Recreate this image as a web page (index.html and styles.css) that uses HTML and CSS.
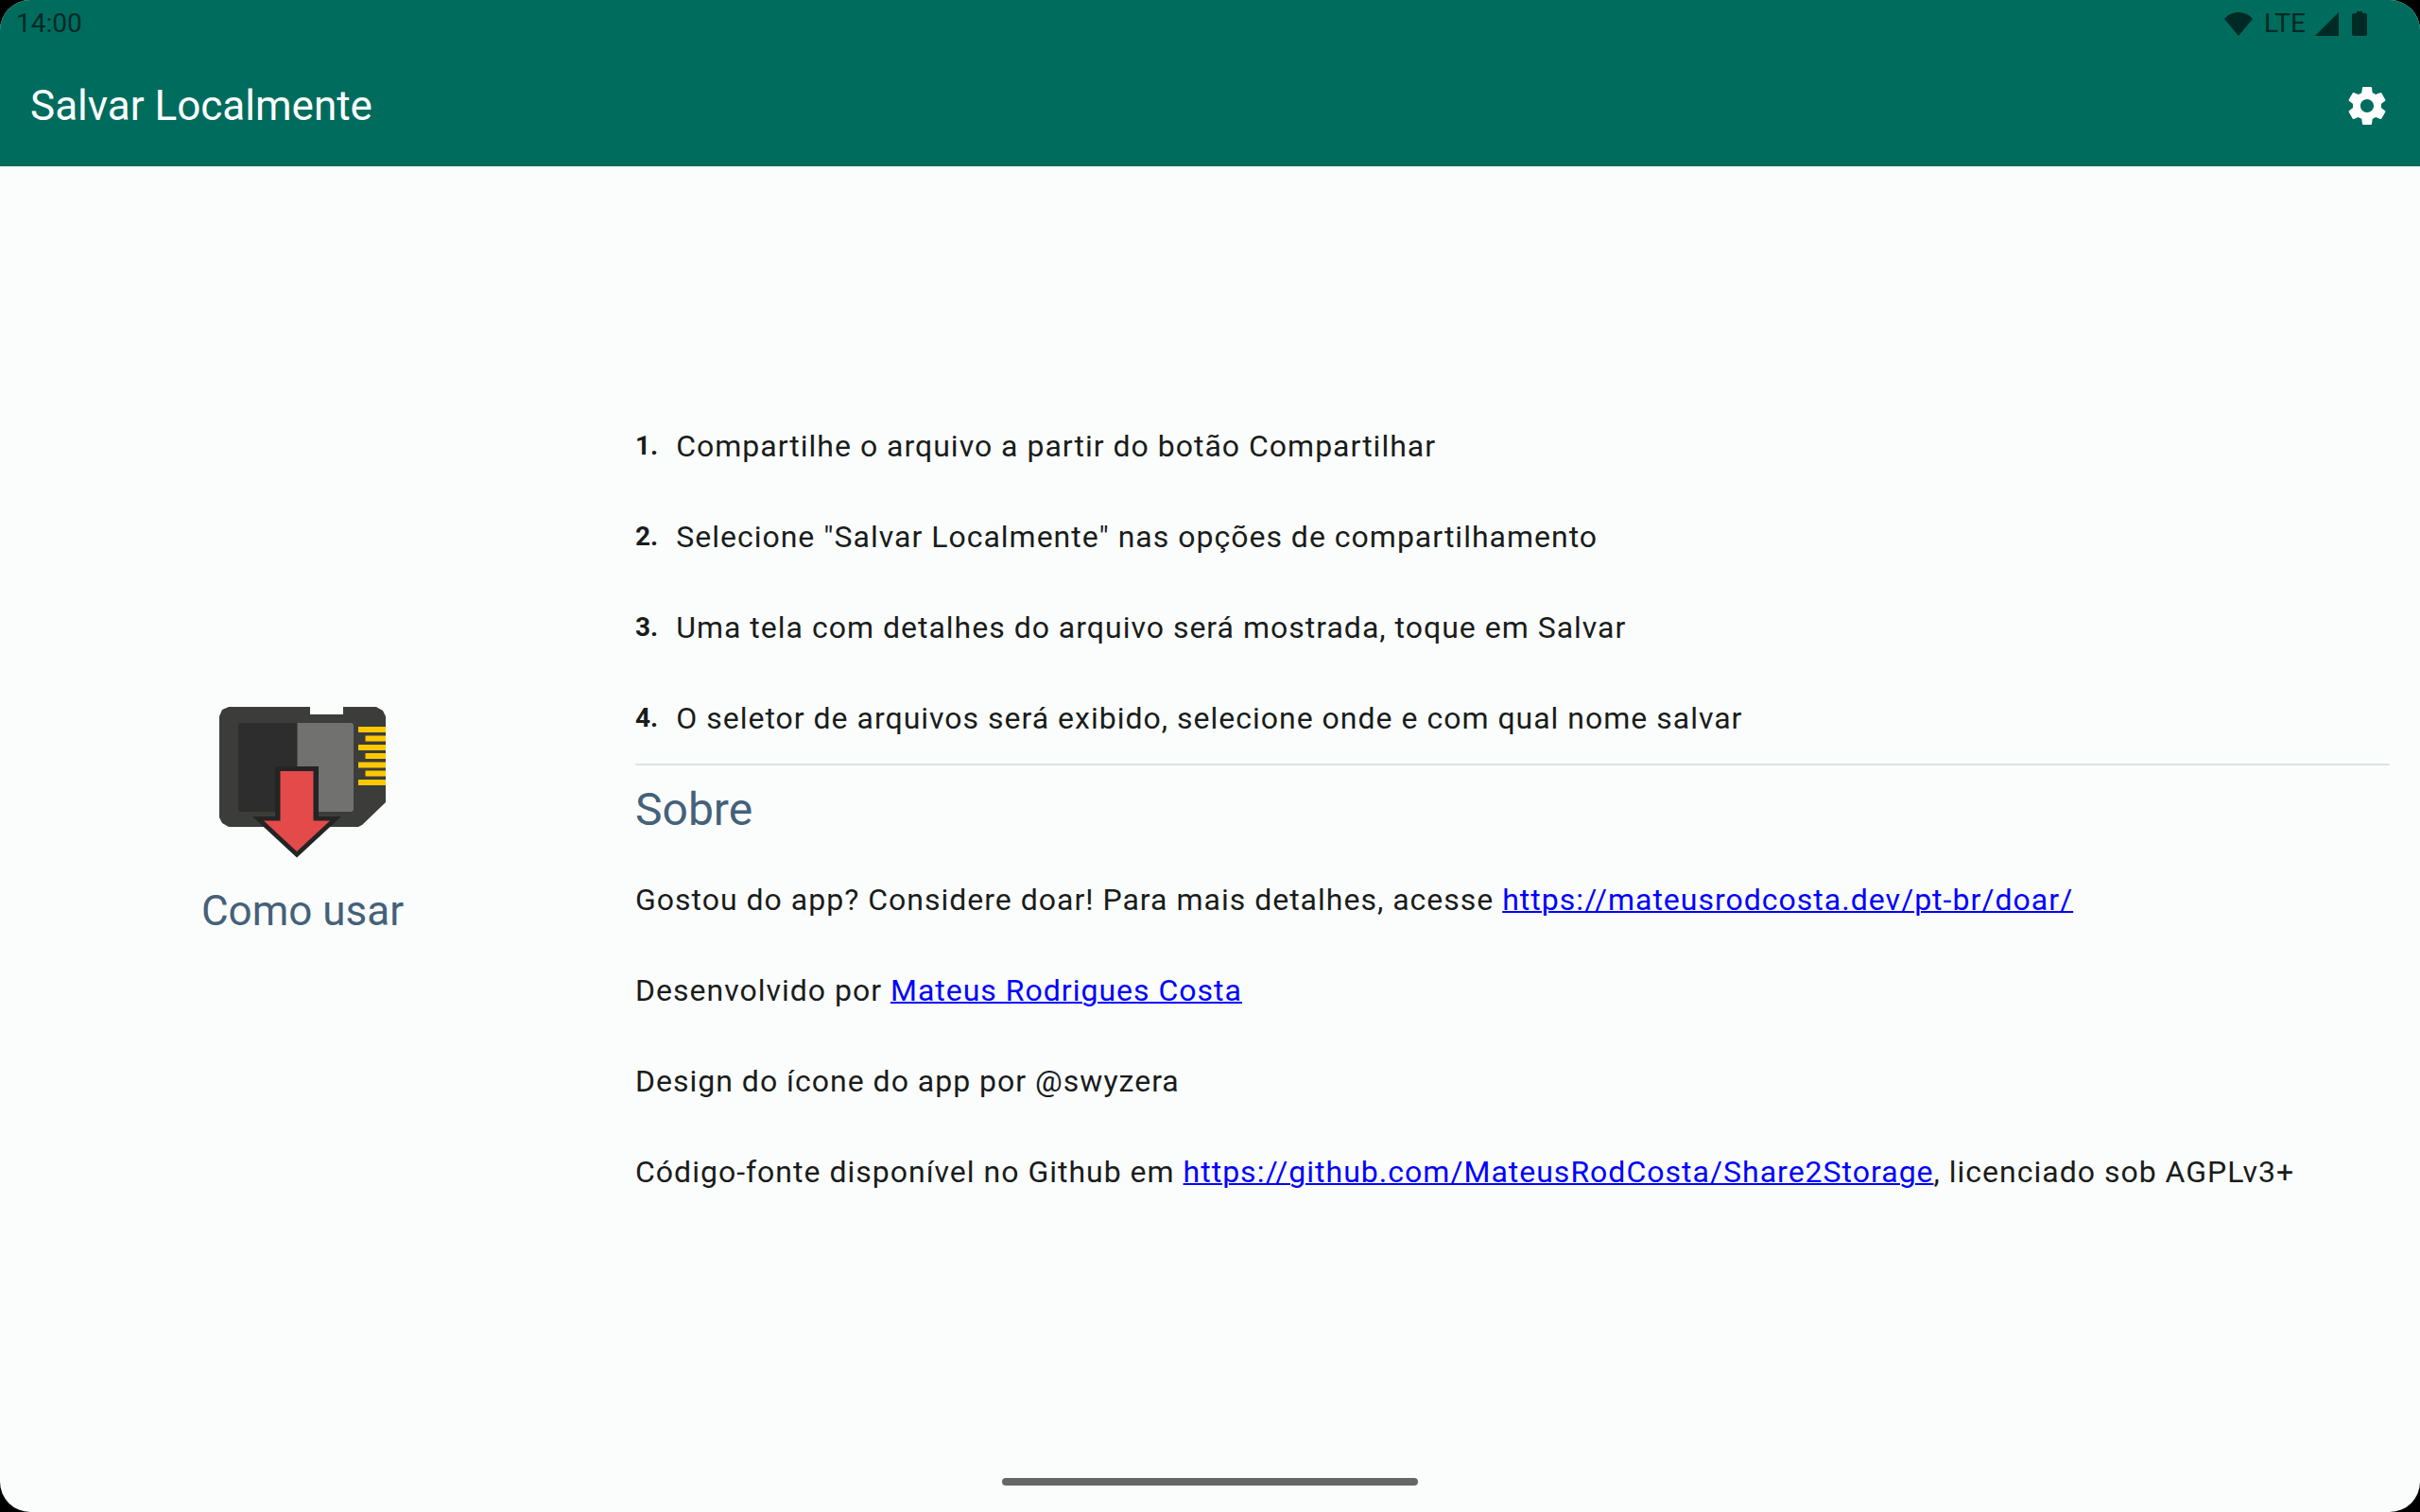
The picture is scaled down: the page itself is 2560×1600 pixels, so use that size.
FILE: index.html
```html
<!DOCTYPE html>
<html lang="pt-BR">
<head>
<meta charset="utf-8">
<title>Salvar Localmente</title>
<link rel="stylesheet" href="styles.css">
</head>
<body>
<div class="screen">
  <header class="top">
    <div class="status">
      <time class="clock">14:00</time>
      <div class="signals">
        <svg class="wifi" viewBox="0 0 30 25" aria-hidden="true"><path d="M15 25 L0 7 Q6 0 15 0 T30 7 Z"/></svg>
        <span class="network">LTE</span>
        <svg class="cell" viewBox="0 0 26 25" aria-hidden="true"><path d="M25 0 V25 H0 Z"/></svg>
        <svg class="battery" viewBox="0 0 16 26" aria-hidden="true"><path d="M5 0 H11 V2 H14 Q16 2 16 4 V24 Q16 26 14 26 H2 Q0 26 0 24 V4 Q0 2 2 2 H5 Z"/></svg>
      </div>
    </div>
    <div class="appbar">
      <h1 class="title">Salvar Localmente</h1>
      <button class="settings" type="button" aria-label="Configurações">
        <svg class="gear" viewBox="0 0 24 24" aria-hidden="true"><path d="M19.43 12.98c.04-.32.07-.64.07-.98s-.03-.66-.07-.98l2.11-1.65c.19-.15.24-.42.12-.64l-2-3.46c-.12-.22-.39-.3-.61-.22l-2.49 1c-.52-.4-1.08-.73-1.69-.98l-.38-2.65C14.46 2.18 14.25 2 14 2h-4c-.25 0-.46.18-.49.42l-.38 2.65c-.61.25-1.17.59-1.69.98l-2.49-1c-.23-.09-.49 0-.61.22l-2 3.46c-.13.22-.07.49.12.64l2.11 1.65c-.04.32-.07.65-.07.98s.03.66.07.98l-2.11 1.65c-.19.15-.24.42-.12.64l2 3.46c.12.22.39.3.61.22l2.49-1c.52.4 1.08.73 1.69.98l.38 2.65c.03.24.24.42.49.42h4c.25 0 .46-.18.49-.42l.38-2.65c.61-.25 1.17-.59 1.69-.98l2.49 1c.23.09.49 0 .61-.22l2-3.46c.12-.22.07-.49-.12-.64l-2.11-1.65zM12 15.5c-1.93 0-3.5-1.57-3.5-3.5s1.57-3.5 3.5-3.5 3.5 1.57 3.5 3.5-1.57 3.5-3.5 3.5z"/></svg>
      </button>
    </div>
  </header>

  <main class="content">
    <section class="intro">
      <svg class="logo" viewBox="12 0 216 216" aria-hidden="true">
        <path fill="#3c3c3a" d="M42 28 H128 V36 H163 V28 H198 L205 32 L208 38 V129 L183 153 L179 155 H42 L35 151 L32 145 V38 L35 31 Z"/>
        <path fill="#2d2d2d" d="M55 45 H115 V139 H55 Q52 139 52 136 V48 Q52 45 55 45 Z"/>
        <path fill="#71716f" d="M114.500 45 H171 Q174 45 174 48 V136 Q174 139 171 139 H114.500 Z"/>
        <path fill="#fdc800" d="M179 49h29v6h-29z M186.500 58.500h21.500v6h-21.500z M179 68h29v6h-29z M186.500 77h21.500v6h-21.500z M179 86.500h29v6h-29z M186.500 95.500h21.500v6h-21.500z M179 105h29v6h-29z"/>
        <path fill="#242424" d="M91 91 H137 V144 H161 L114 187.500 L67 144 H91 Z"/>
        <path fill="#e44a4a" d="M96.500 96 H131.500 V148.500 H149 L114 181 L79 148.500 H96.500 Z"/>
      </svg>
      <h2 class="intro-title">Como usar</h2>
    </section>

    <section class="details">
      <ol class="steps">
        <li class="row step"><span class="number">1.</span><span>Compartilhe o arquivo a partir do botão Compartilhar</span></li>
        <li class="row step"><span class="number">2.</span><span>Selecione "Salvar Localmente" nas opções de compartilhamento</span></li>
        <li class="row step"><span class="number">3.</span><span>Uma tela com detalhes do arquivo será mostrada, toque em Salvar</span></li>
        <li class="row step"><span class="number">4.</span><span>O seletor de arquivos será exibido, selecione onde e com qual nome salvar</span></li>
      </ol>
      <h2 class="about-title">Sobre</h2>
      <p class="row">Gostou do app? Considere doar! Para mais detalhes, acesse&nbsp;<a href="https://mateusrodcosta.dev/pt-br/doar/">https://mateusrodcosta.dev/pt-br/doar/</a></p>
      <p class="row">Desenvolvido por&nbsp;<a href="https://mateusrodcosta.dev/">Mateus Rodrigues Costa</a></p>
      <p class="row">Design do ícone do app por @swyzera</p>
      <p class="row">Código-fonte disponível no Github em&nbsp;<a href="https://github.com/MateusRodCosta/Share2Storage">https://github.com/MateusRodCosta/Share2Storage</a>, licenciado sob AGPLv3+</p>
    </section>
  </main>

  <footer class="navbar"><span class="handle"></span></footer>
</div>
</body>
</html>
```
FILE: styles.css
```css
* {
  box-sizing: border-box;
}

body {
  margin: 0;
  background: #000;
  color: #191c1b;
  font-family: Roboto, "Liberation Sans", sans-serif;
  font-size: 32px;
}

h1, h2, p, ol {
  margin: 0;
  padding: 0;
  font-weight: 400;
}

.screen {
  display: flex;
  flex-direction: column;
  min-height: 100vh;
  overflow: hidden;
  border-radius: 32px;
  background: #fbfdfc;
}

.top {
  background: #006c5e;
}

.status {
  display: flex;
  align-items: center;
  justify-content: space-between;
  height: 48px;
  padding: 2px 56px 0 17px;
  color: #002a25;
  font-size: 28px;
  line-height: 46px;
}

.signals {
  display: flex;
  align-items: center;
}

.signals svg {
  fill: currentColor;
}

.wifi {
  width: 30px;
  height: 25px;
  margin-right: 12px;
}

.cell {
  width: 26px;
  height: 25px;
  margin: 0 13px 0 10px;
}

.battery {
  width: 16px;
  height: 26px;
}

.appbar {
  display: flex;
  align-items: center;
  justify-content: space-between;
  height: 128px;
  padding: 0 8px 0 32px;
  color: #fff;
}

.title {
  font-size: 44px;
  line-height: 56px;
}

.settings {
  display: grid;
  place-items: center;
  width: 96px;
  height: 96px;
  padding: 0;
  border: 0;
  border-radius: 50%;
  background: none;
  color: inherit;
}

.gear {
  width: 48px;
  height: 48px;
  fill: currentColor;
}

.content {
  display: grid;
  flex: 1;
  grid-template-columns: 1fr 3fr;
  align-items: center;
}

.intro {
  display: flex;
  flex-direction: column;
  align-items: center;
  color: #446179;
}

.logo {
  width: 216px;
  height: 216px;
}

.intro-title {
  font-size: 44px;
  line-height: 56px;
}

.details {
  padding: 0 32px;
}

.steps {
  border-bottom: 2px solid #dae5e1;
  list-style: none;
}

.row {
  display: flex;
  align-items: center;
  min-height: 96px;
  line-height: 48px;
  letter-spacing: 1px;
}

.step {
  gap: 19px;
}

.number {
  font-size: 28px;
  font-weight: 700;
  letter-spacing: 0;
}

.about-title {
  color: #446179;
  font-size: 48px;
  line-height: 94px;
}

a {
  color: #00f;
  text-decoration-thickness: 2px;
}

.navbar {
  display: flex;
  justify-content: center;
  height: 64px;
  padding-top: 28px;
}

.handle {
  width: 440px;
  height: 8px;
  border-radius: 4px;
  background: #666;
}
```
